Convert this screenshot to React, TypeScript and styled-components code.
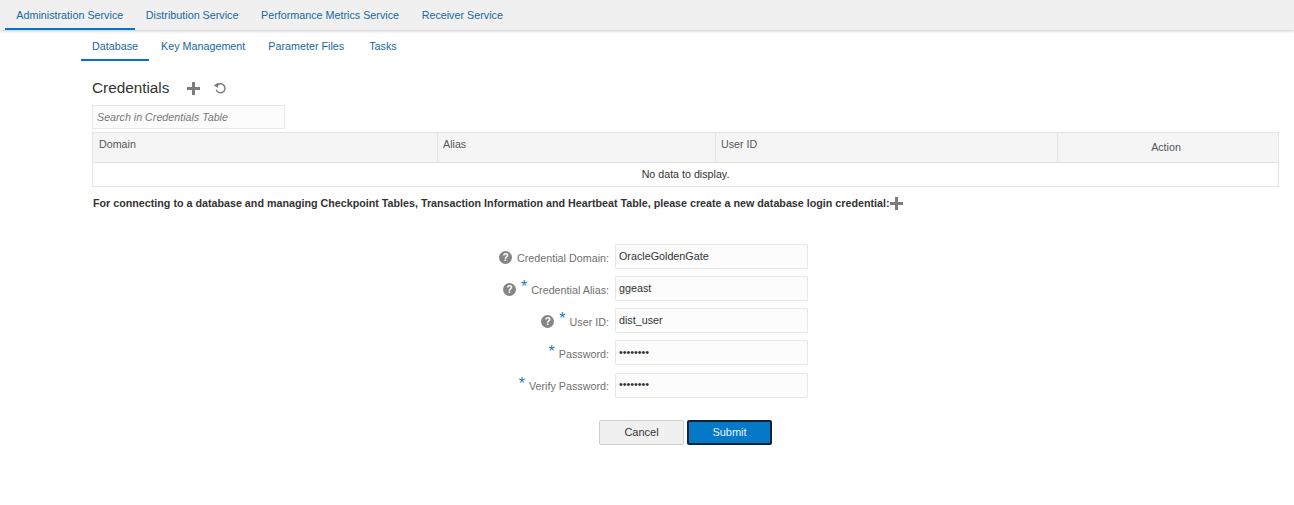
import styled, { createGlobalStyle } from 'styled-components';

const GlobalStyle = createGlobalStyle`
  html, body {
    margin: 0;
    padding: 0;
    background: #fff;
    font-family: "Liberation Sans", Arial, sans-serif;
  }
`;

const TopBar = styled.nav`
  display: flex;
  height: 30px;
  padding-left: 5px;
  background: #f0f0f0;
  box-shadow: 0 1px 3px rgba(0, 0, 0, 0.22);
`;

const Tab = styled.a<{ $active?: boolean }>`
  display: flex;
  align-items: center;
  box-sizing: border-box;
  height: 30px;
  padding: 2px 11.3px 0;
  font-size: 10.75px;
  color: #16689f;
  border-bottom: 2px solid ${(p) => (p.$active ? '#0572ce' : 'transparent')};
`;

const SubBar = styled.nav`
  display: flex;
  gap: 1px;
  height: 31px;
  padding-left: 81px;
`;

const SubTab = styled(Tab)`
  height: 31px;
  padding: 2px 11px 0;

  &:last-child {
    margin-left: 2px;
  }
`;

const Content = styled.main`
  padding: 16px 15px 0 92px;
`;

const TitleRow = styled.div`
  display: flex;
  align-items: center;
  height: 22px;
`;

const Title = styled.h1`
  margin: 0 18px 0 0;
  font-size: 15.3px;
  font-weight: 400;
  color: #333;
`;

const IconButton = styled.span`
  display: inline-flex;
  margin-right: 13px;
`;

const Search = styled.input`
  display: block;
  box-sizing: border-box;
  width: 193px;
  height: 24px;
  margin-top: 6px;
  margin-bottom: 3px;
  padding: 0 4px;
  border: 1px solid #e8e8e8;
  background: #fcfcfc;
  font: italic 10.7px "Liberation Sans", Arial, sans-serif;
  color: #666;
  outline: none;

  &::placeholder {
    color: #777;
    opacity: 1;
  }
`;

const Table = styled.div`
  border: 1px solid #e4e4e4;
`;

const HeaderRow = styled.div`
  display: grid;
  grid-template-columns: 344px 278px 342px 1fr;
  height: 29px;
  background: #f5f5f5;
  border-bottom: 1px solid #e0e0e0;
`;

const HeaderCell = styled.div`
  box-sizing: border-box;
  padding: 5px 6px 0 5px;
  border-left: 1px solid #e4e4e4;
  font-size: 10.7px;
  color: #555;

  &:first-child {
    padding-left: 6px;
    border-left: none;
  }
`;

const ActionCell = styled(HeaderCell)`
  padding: 8px 4px 0 0;
  text-align: center;
`;

const EmptyRow = styled.div`
  height: 23px;
  line-height: 23px;
  font-size: 10.7px;
  color: #333;
  text-align: center;
`;

const Note = styled.p`
  display: flex;
  align-items: center;
  height: 14px;
  margin: 9px 0 0;
  padding-left: 1px;
  font-size: 10.73px;
  font-weight: 700;
  color: #333;
`;

const Form = styled.form`
  display: flex;
  flex-direction: column;
  gap: 7.15px;
  margin: 34px 0 0 300px;
  width: 416px;
`;

const FormRow = styled.div`
  display: grid;
  grid-template-columns: 217px 193px;
  column-gap: 6px;
  align-items: center;
`;

const Label = styled.label`
  display: flex;
  justify-content: flex-end;
  align-items: center;
  padding-top: 2px;
  font-size: 10.75px;
  color: #707070;
`;

const Help = styled.span`
  display: inline-flex;
  align-items: center;
  justify-content: center;
  width: 13px;
  height: 13px;
  margin-right: 5px;
  border-radius: 50%;
  background: #858585;
  font-size: 10px;
  font-weight: 700;
  color: #fff;
`;

const Required = styled.span`
  align-self: flex-start;
  margin: -3px 4px 0 0;
  font-size: 16px;
  line-height: 14px;
  color: #1f7ab8;
`;

const Field = styled.input`
  box-sizing: border-box;
  width: 193px;
  height: 25px;
  padding: 0 3px 2px;
  border: 1px solid #e8e8e8;
  border-radius: 1px;
  background: #fcfcfc;
  font: 10.75px "Liberation Sans", Arial, sans-serif;
  color: #333;
  outline: none;
`;

const Actions = styled.div`
  display: flex;
  gap: 3px;
  margin: 22px 0 0 507px;
`;

const Button = styled.button<{ $primary?: boolean }>`
  box-sizing: border-box;
  width: 85px;
  height: 25px;
  border-radius: 2px;
  border: ${(p) => (p.$primary ? '2px solid #0d2436' : '1px solid #cfcfcf')};
  background: ${(p) => (p.$primary ? '#0479c7' : '#f0f0f0')};
  color: ${(p) => (p.$primary ? '#e8f2fa' : '#333')};
  font: 11px "Liberation Sans", Arial, sans-serif;
`;

function PlusIcon() {
  return (
    <svg width="13" height="13" viewBox="0 0 13 13">
      <path d="M5 0h3v5h5v3H8v5H5V8H0V5h5z" fill="#7c7c7c" />
    </svg>
  );
}

function RefreshIcon() {
  return (
    <svg width="14" height="14" viewBox="0 0 14 14" fill="none">
      <path d="M4.4 4A4.5 4.5 0 1 1 3.2 8.6" stroke="#7c7c7c" strokeWidth="1.5" />
      <path d="M0.8 4.4l4.4-3v5.6z" fill="#7c7c7c" />
    </svg>
  );
}

const fields = [
  { label: 'Credential Domain:', value: 'OracleGoldenGate', help: true },
  { label: 'Credential Alias:', value: 'ggeast', help: true, required: true },
  { label: 'User ID:', value: 'dist_user', help: true, required: true },
  { label: 'Password:', value: 'password', required: true, secret: true },
  { label: 'Verify Password:', value: 'password', required: true, secret: true },
];

export default function App() {
  return (
    <>
      <GlobalStyle />
      <TopBar>
        <Tab $active>Administration Service</Tab>
        <Tab>Distribution Service</Tab>
        <Tab>Performance Metrics Service</Tab>
        <Tab>Receiver Service</Tab>
      </TopBar>
      <SubBar>
        <SubTab $active>Database</SubTab>
        <SubTab>Key Management</SubTab>
        <SubTab>Parameter Files</SubTab>
        <SubTab>Tasks</SubTab>
      </SubBar>
      <Content>
        <TitleRow>
          <Title>Credentials</Title>
          <IconButton><PlusIcon /></IconButton>
          <IconButton><RefreshIcon /></IconButton>
        </TitleRow>
        <Search placeholder="Search in Credentials Table" />
        <Table>
          <HeaderRow>
            <HeaderCell>Domain</HeaderCell>
            <HeaderCell>Alias</HeaderCell>
            <HeaderCell>User ID</HeaderCell>
            <ActionCell>Action</ActionCell>
          </HeaderRow>
          <EmptyRow>No data to display.</EmptyRow>
        </Table>
        <Note>
          For connecting to a database and managing Checkpoint Tables, Transaction Information and Heartbeat Table, please create a new database login credential:
          <PlusIcon />
        </Note>
        <Form>
          {fields.map((f) => (
            <FormRow key={f.label}>
              <Label>
                {f.help && <Help>?</Help>}
                {f.required && <Required>*</Required>}
                {f.label}
              </Label>
              <Field type={f.secret ? 'password' : 'text'} defaultValue={f.value} readOnly />
            </FormRow>
          ))}
        </Form>
        <Actions>
          <Button type="button">Cancel</Button>
          <Button type="button" $primary>Submit</Button>
        </Actions>
      </Content>
    </>
  );
}
